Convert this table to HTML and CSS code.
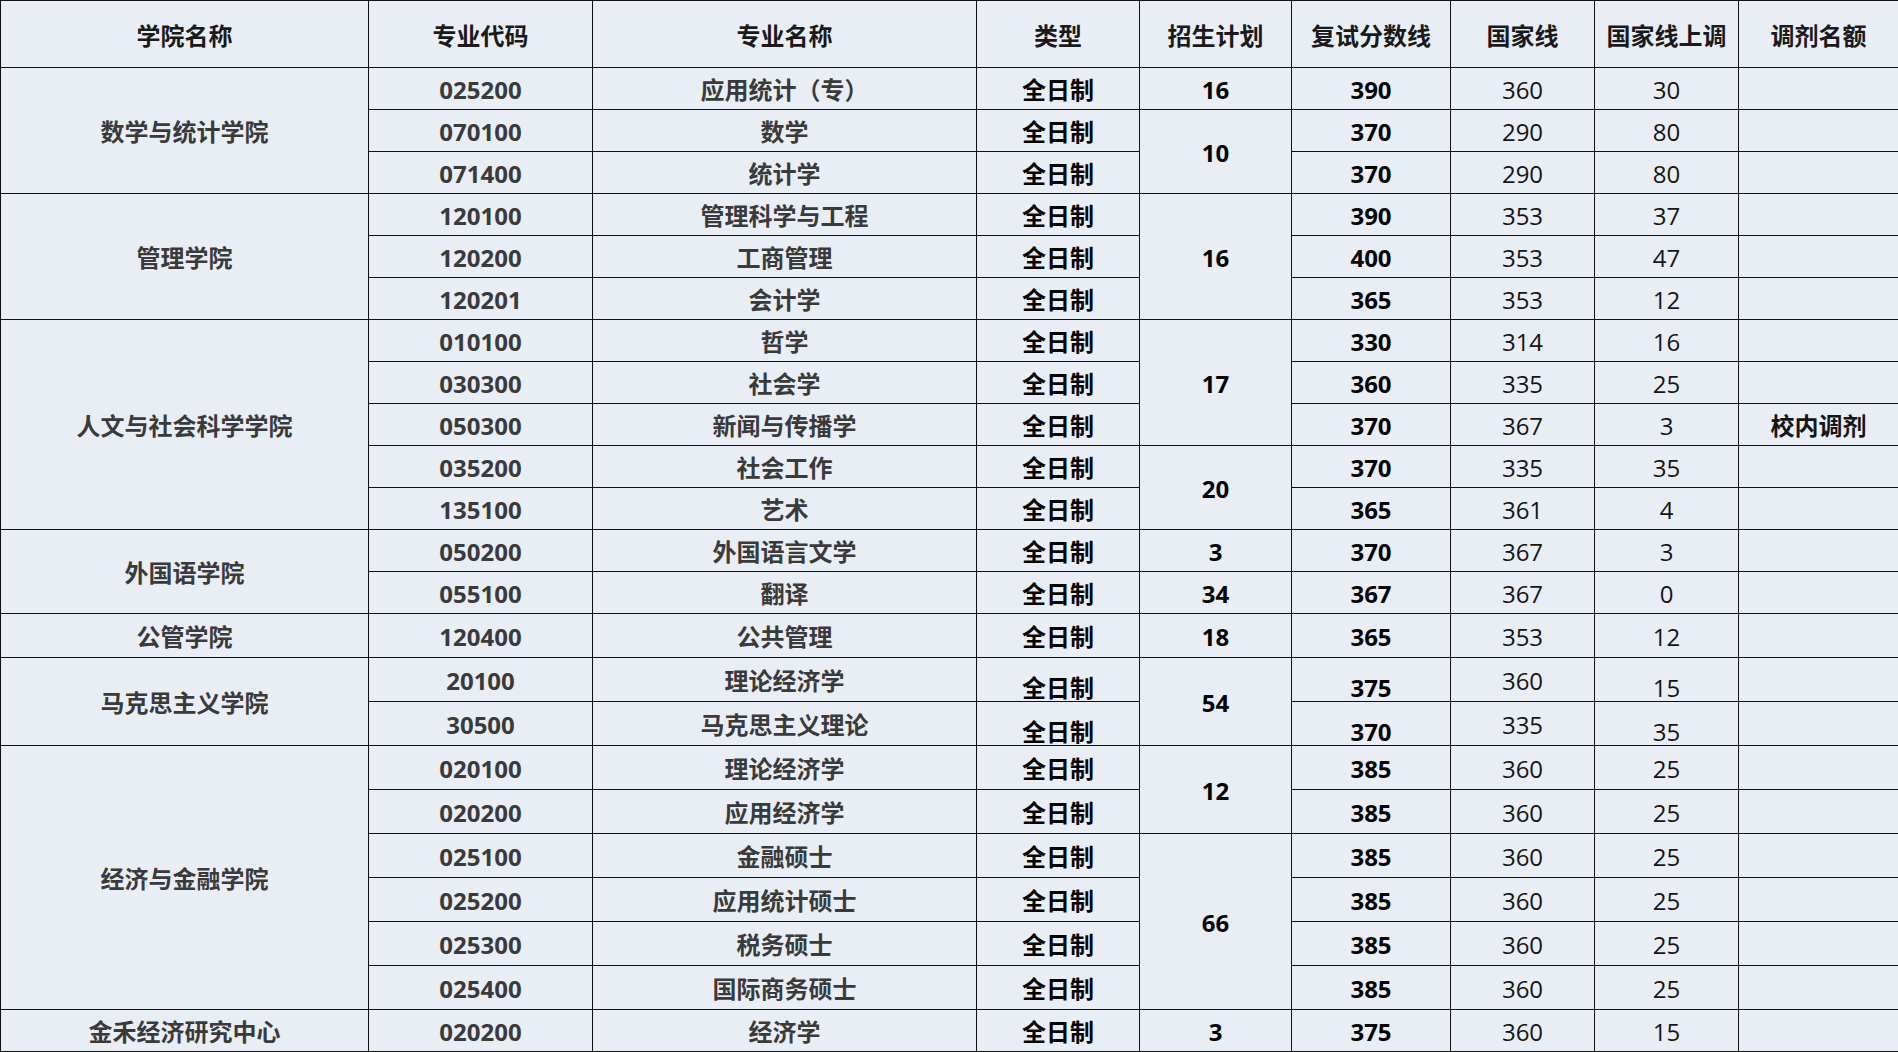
FILE: index.html
```html
<!DOCTYPE html>
<html lang="zh-CN">
<head>
<meta charset="utf-8">
<title>复试分数线</title>
<link rel="stylesheet" href="styles.css">
</head>
<body>
<table class="score-table">
  <colgroup>
    <col class="c-college">
    <col class="c-code">
    <col class="c-name">
    <col class="c-type">
    <col class="c-plan">
    <col class="c-score">
    <col class="c-nat">
    <col class="c-up">
    <col class="c-adj">
  </colgroup>
  <thead>
    <tr class="head-row">
      <th>学院名称</th><th>专业代码</th><th>专业名称</th><th>类型</th><th>招生计划</th><th>复试分数线</th><th>国家线</th><th>国家线上调</th><th>调剂名额</th>
    </tr>
  </thead>
  <tbody>
    <tr class="r42">
      <td class="college" rowspan="3">数学与统计学院</td><td class="code">025200</td><td class="name">应用统计（专）</td><td class="type">全日制</td><td class="plan">16</td><td class="score">390</td><td class="nat">360</td><td class="up">30</td><td class="adj"></td>
    </tr>
    <tr class="r42">
      <td class="code">070100</td><td class="name">数学</td><td class="type">全日制</td><td class="plan" rowspan="2">10</td><td class="score">370</td><td class="nat">290</td><td class="up">80</td><td class="adj"></td>
    </tr>
    <tr class="r42">
      <td class="code">071400</td><td class="name">统计学</td><td class="type">全日制</td><td class="score">370</td><td class="nat">290</td><td class="up">80</td><td class="adj"></td>
    </tr>
    <tr class="r42">
      <td class="college" rowspan="3">管理学院</td><td class="code">120100</td><td class="name">管理科学与工程</td><td class="type">全日制</td><td class="plan" rowspan="3">16</td><td class="score">390</td><td class="nat">353</td><td class="up">37</td><td class="adj"></td>
    </tr>
    <tr class="r42">
      <td class="code">120200</td><td class="name">工商管理</td><td class="type">全日制</td><td class="score">400</td><td class="nat">353</td><td class="up">47</td><td class="adj"></td>
    </tr>
    <tr class="r42">
      <td class="code">120201</td><td class="name">会计学</td><td class="type">全日制</td><td class="score">365</td><td class="nat">353</td><td class="up">12</td><td class="adj"></td>
    </tr>
    <tr class="r42">
      <td class="college" rowspan="5">人文与社会科学学院</td><td class="code">010100</td><td class="name">哲学</td><td class="type">全日制</td><td class="plan" rowspan="3">17</td><td class="score">330</td><td class="nat">314</td><td class="up">16</td><td class="adj"></td>
    </tr>
    <tr class="r42">
      <td class="code">030300</td><td class="name">社会学</td><td class="type">全日制</td><td class="score">360</td><td class="nat">335</td><td class="up">25</td><td class="adj"></td>
    </tr>
    <tr class="r42">
      <td class="code">050300</td><td class="name">新闻与传播学</td><td class="type">全日制</td><td class="score">370</td><td class="nat">367</td><td class="up">3</td><td class="adj">校内调剂</td>
    </tr>
    <tr class="r42">
      <td class="code">035200</td><td class="name">社会工作</td><td class="type">全日制</td><td class="plan" rowspan="2">20</td><td class="score">370</td><td class="nat">335</td><td class="up">35</td><td class="adj"></td>
    </tr>
    <tr class="r42">
      <td class="code">135100</td><td class="name">艺术</td><td class="type">全日制</td><td class="score">365</td><td class="nat">361</td><td class="up">4</td><td class="adj"></td>
    </tr>
    <tr class="r42">
      <td class="college" rowspan="2">外国语学院</td><td class="code">050200</td><td class="name">外国语言文学</td><td class="type">全日制</td><td class="plan">3</td><td class="score">370</td><td class="nat">367</td><td class="up">3</td><td class="adj"></td>
    </tr>
    <tr class="r42">
      <td class="code">055100</td><td class="name">翻译</td><td class="type">全日制</td><td class="plan">34</td><td class="score">367</td><td class="nat">367</td><td class="up">0</td><td class="adj"></td>
    </tr>
    <tr class="r44">
      <td class="college">公管学院</td><td class="code">120400</td><td class="name">公共管理</td><td class="type">全日制</td><td class="plan">18</td><td class="score">365</td><td class="nat">353</td><td class="up">12</td><td class="adj"></td>
    </tr>
    <tr class="r44">
      <td class="college" rowspan="2">马克思主义学院</td><td class="code">20100</td><td class="name">理论经济学</td><td class="type low">全日制</td><td class="plan" rowspan="2">54</td><td class="score low">375</td><td class="nat">360</td><td class="up low">15</td><td class="adj"></td>
    </tr>
    <tr class="r44">
      <td class="code">30500</td><td class="name">马克思主义理论</td><td class="type low">全日制</td><td class="score low">370</td><td class="nat">335</td><td class="up low">35</td><td class="adj"></td>
    </tr>
    <tr class="r44">
      <td class="college" rowspan="6">经济与金融学院</td><td class="code">020100</td><td class="name">理论经济学</td><td class="type">全日制</td><td class="plan" rowspan="2">12</td><td class="score">385</td><td class="nat">360</td><td class="up">25</td><td class="adj"></td>
    </tr>
    <tr class="r44">
      <td class="code">020200</td><td class="name">应用经济学</td><td class="type">全日制</td><td class="score">385</td><td class="nat">360</td><td class="up">25</td><td class="adj"></td>
    </tr>
    <tr class="r44">
      <td class="code">025100</td><td class="name">金融硕士</td><td class="type">全日制</td><td class="plan" rowspan="4">66</td><td class="score">385</td><td class="nat">360</td><td class="up">25</td><td class="adj"></td>
    </tr>
    <tr class="r44">
      <td class="code">025200</td><td class="name">应用统计硕士</td><td class="type">全日制</td><td class="score">385</td><td class="nat">360</td><td class="up">25</td><td class="adj"></td>
    </tr>
    <tr class="r44">
      <td class="code">025300</td><td class="name">税务硕士</td><td class="type">全日制</td><td class="score">385</td><td class="nat">360</td><td class="up">25</td><td class="adj"></td>
    </tr>
    <tr class="r44">
      <td class="code">025400</td><td class="name">国际商务硕士</td><td class="type">全日制</td><td class="score">385</td><td class="nat">360</td><td class="up">25</td><td class="adj"></td>
    </tr>
    <tr class="r42">
      <td class="college">金禾经济研究中心</td><td class="code">020200</td><td class="name">经济学</td><td class="type">全日制</td><td class="plan">3</td><td class="score">375</td><td class="nat">360</td><td class="up">15</td><td class="adj"></td>
    </tr>
  </tbody>
</table>
</body>
</html>
```

FILE: styles.css
```css
html, body {
  margin: 0;
  padding: 0;
  background: #e9edf4;
}

body {
  font-family: "Open Sans", "Noto Sans CJK SC", sans-serif;
  font-size: 24px;
}

.score-table {
  border-collapse: collapse;
  table-layout: fixed;
  width: 1898px;
  background: #e9edf4;
}

.c-college { width: 368px; }
.c-code { width: 224px; }
.c-name { width: 384px; }
.c-type { width: 163px; }
.c-plan { width: 152px; }
.c-score { width: 159px; }
.c-nat { width: 144px; }
.c-up { width: 144px; }
.c-adj { width: 160px; }

.score-table th,
.score-table td {
  border: 1px solid #111;
  padding: 3px 0 0;
  text-align: center;
  vertical-align: middle;
  line-height: 1.2;
  white-space: nowrap;
}

.head-row { height: 67px; }
.r42 { height: 42px; }
.r44 { height: 44px; }

.score-table th {
  font-weight: 700;
  color: #1a1a1a;
  padding-top: 5px;
}

.college,
.code,
.name {
  font-weight: 700;
  color: #3a3a3a;
}

.type,
.plan,
.score {
  font-weight: 700;
  color: #050505;
}

.nat,
.up {
  font-weight: 400;
  color: #151515;
}

.adj {
  font-weight: 700;
  color: #151515;
}

.score-table td.low {
  line-height: 1;
  padding-top: 16px;
}
```
